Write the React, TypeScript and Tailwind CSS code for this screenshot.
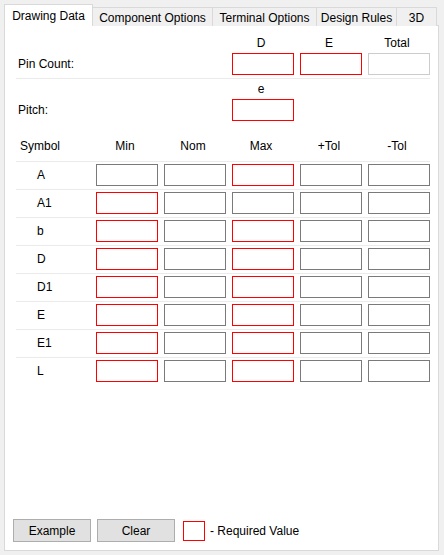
import React from "react";

type Field = "req" | "opt" | "off" | null;

const tabs = [
  { label: "Drawing Data", width: "w-[89px]" },
  { label: "Component Options", width: "w-[120px]" },
  { label: "Terminal Options", width: "w-[104px]" },
  { label: "Design Rules", width: "w-[80px]" },
  { label: "3D", width: "w-[40px]" },
];

// which dimension fields are mandatory for each symbol (min, nom, max, +tol, -tol)
const symbols: { name: string; fields: Field[] }[] = [
  { name: "A", fields: ["opt", "opt", "req", "opt", "opt"] },
  { name: "A1", fields: ["req", "opt", "opt", "opt", "opt"] },
  { name: "b", fields: ["req", "opt", "req", "opt", "opt"] },
  { name: "D", fields: ["req", "opt", "req", "opt", "opt"] },
  { name: "D1", fields: ["req", "opt", "req", "opt", "opt"] },
  { name: "E", fields: ["req", "opt", "req", "opt", "opt"] },
  { name: "E1", fields: ["req", "opt", "req", "opt", "opt"] },
  { name: "L", fields: ["req", "opt", "req", "opt", "opt"] },
];

const grid = "grid grid-cols-[74px_repeat(5,62px)] gap-x-[6px]";

const Box = ({ kind }: { kind: Field }) => {
  if (!kind) return <div />;
  const border =
    kind === "req"
      ? "border-[#ff0000]"
      : kind === "off"
      ? "border-[#cccccc]"
      : "border-[#7a7a7a]";
  return <div className={`h-[22px] w-full border bg-white ${border}`} />;
};

const HeaderCell = ({ text }: { text: string }) => (
  <div className="h-[20px] flex items-center justify-center pr-[4px]">{text}</div>
);

const App = () => {
  return (
    <div
      className="w-[444px] h-[555px] bg-[#f0f0f0] pt-[4px] text-[12px] leading-none text-black"
      style={{ fontFamily: '"Liberation Sans", Arial, sans-serif' }}
    >
      {/* tab strip */}
      <div className="relative z-10 flex items-end pl-[4px] h-[22px]">
        {tabs.map((t, i) =>
          i === 0 ? (
            <div
              key={t.label}
              className={`${t.width} h-[22px] bg-white border border-b-0 border-[#d9d9d9] flex justify-center pt-[5px]`}
            >
              {t.label}
            </div>
          ) : (
            <div
              key={t.label}
              className={`${t.width} h-[19px] bg-[#f0f0f0] border-t border-r border-[#d9d9d9] flex justify-center pt-[4px]`}
            >
              {t.label}
            </div>
          )
        )}
      </div>

      {/* tab page */}
      <div className="-mt-px ml-[4px] w-[435px] h-[526px] bg-white border border-[#d9d9d9] flex flex-col">
        <div className="pl-[11px] pt-[7px]">
          {/* pin count */}
          <div className={grid}>
            <div />
            <div />
            <div />
            <HeaderCell text="D" />
            <HeaderCell text="E" />
            <HeaderCell text="Total" />
          </div>
          <div className={`${grid} w-[414px] pb-[3px] border-b border-[#ebebeb]`}>
            <div className="flex items-center pl-[2px]">Pin Count:</div>
            <div />
            <div />
            <Box kind="req" />
            <Box kind="req" />
            <Box kind="off" />
          </div>

          {/* pitch */}
          <div className={grid}>
            <div />
            <div />
            <div />
            <HeaderCell text="e" />
          </div>
          <div className={grid}>
            <div className="flex items-center pl-[2px]">Pitch:</div>
            <div />
            <div />
            <Box kind="req" />
          </div>

          {/* dimension table */}
          <div className={`${grid} w-[414px] mt-[15px] pb-[5px] border-b border-[#ebebeb]`}>
            <div className="h-[20px] flex items-center pl-[4px]">Symbol</div>
            {["Min", "Nom", "Max", "+Tol", "-Tol"].map((h) => (
              <HeaderCell key={h} text={h} />
            ))}
          </div>
          {symbols.map((s, i) => (
            <div
              key={s.name}
              className={`${grid} w-[414px] pt-[2px] pb-[3px] ${
                i < symbols.length - 1 ? "border-b border-[#ebebeb]" : ""
              }`}
            >
              <div className="flex items-center pl-[21px]">{s.name}</div>
              {s.fields.map((f, j) => (
                <Box key={j} kind={f} />
              ))}
            </div>
          ))}
        </div>

        <div className="flex-1" />

        {/* footer */}
        <div className="flex items-center pl-[8px] pb-[8px]">
          <button className="w-[78px] h-[23px] bg-[#e1e1e1] border border-[#adadad]">
            Example
          </button>
          <button className="ml-[6px] w-[78px] h-[23px] bg-[#e1e1e1] border border-[#adadad]">
            Clear
          </button>
          <div className="ml-[8px] w-[22px] h-[20px] border border-[#ff0000]" />
          <span className="ml-[5px]">- Required Value</span>
        </div>
      </div>
    </div>
  );
};

export default App;
